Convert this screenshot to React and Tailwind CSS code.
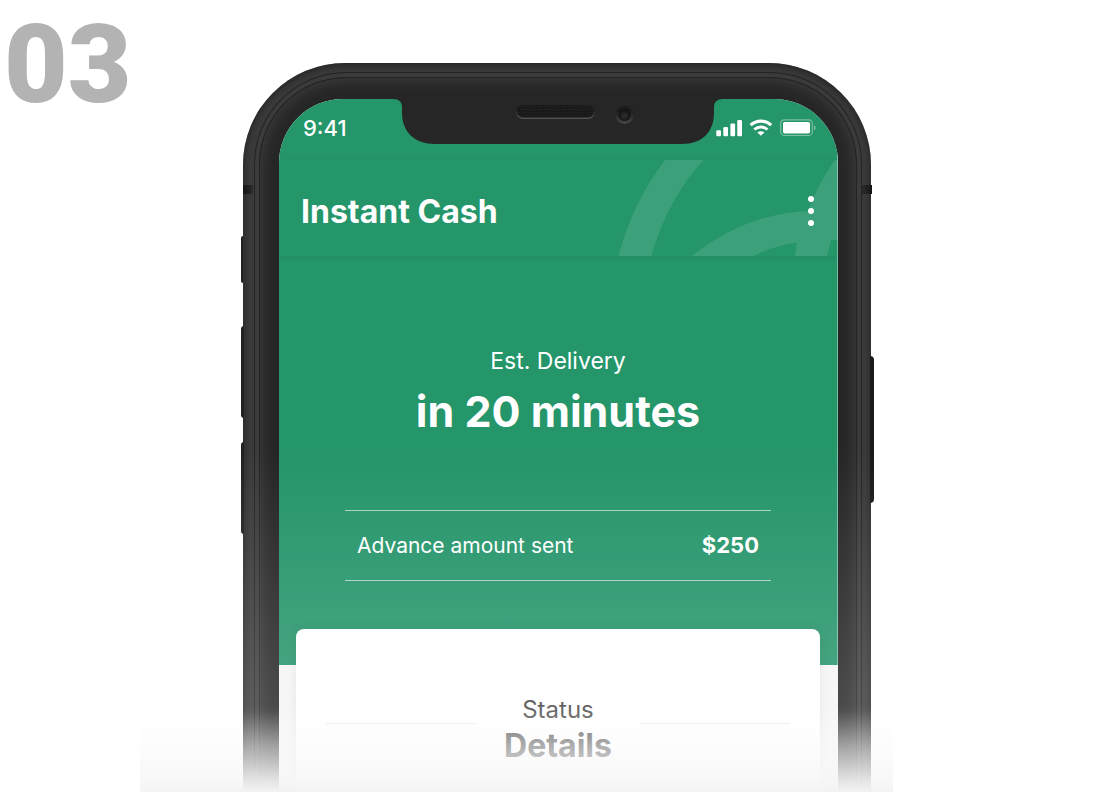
const deliveryInfo = {
  title: "Instant Cash",
  estimate: "in 20 minutes",
  amount: "$250",
};

function Notch() {
  return (
    <svg
      width="330"
      height="45"
      viewBox="0 0 330 45"
      className="shrink-0 self-start"
      aria-hidden="true"
    >
      <defs>
        <pattern id="mesh" width="3" height="3" patternUnits="userSpaceOnUse">
          <rect width="3" height="3" fill="#1e1e1e" />
          <path d="M0 0h1v1h-1zM2 2h1v1h-1z" fill="#121212" />
        </pattern>
        <linearGradient id="rim" x1="0" y1="0" x2="0" y2="1">
          <stop offset="0.3" stopColor="#1a1a1a" />
          <stop offset="1" stopColor="#555555" />
        </linearGradient>
        <radialGradient id="lens" cx="0.5" cy="0.6" r="0.5">
          <stop offset="0" stopColor="#303030" />
          <stop offset="1" stopColor="#121212" />
        </radialGradient>
      </defs>
      <path
        d="M0 0C6 0 9 3 9 8V14C9 33 22 45 42 45H289C309 45 321 33 321 14V8C321 3 324 0 330 0Z"
        fill="#262626"
      />
      <rect x="123" y="6" width="79" height="14" rx="7" fill="url(#rim)" />
      <rect x="124" y="6.5" width="77" height="12" rx="6" fill="url(#mesh)" />
      <circle cx="231.5" cy="15.7" r="9.3" fill="url(#rim)" opacity="0.7" />
      <circle cx="231.5" cy="15.7" r="6.3" fill="url(#lens)" />
    </svg>
  );
}

function StatusIcons() {
  return (
    <svg
      width="100"
      height="18"
      viewBox="0 0 100 18"
      className="mr-[21px] shrink-0"
      role="img"
      aria-label="Signal, Wi-Fi and battery"
    >
      <g fill="white">
        <rect x="0.3" y="11.2" width="4.7" height="6" rx="1.2" />
        <rect x="7.3" y="8" width="4.7" height="9.2" rx="1.2" />
        <rect x="14.4" y="4.4" width="4.7" height="12.8" rx="1.2" />
        <rect x="21.3" y="1" width="4.7" height="16.2" rx="1.2" />
        <rect x="67" y="3" width="27" height="11.4" rx="1.6" />
        <path d="M98 6.2C100.2 7.2 100.2 10.4 98 11.4Z" opacity="0.4" />
        <path d="M44.9 16.8L41.4 13.4C43.4 11.7 46.4 11.7 48.4 13.4Z" />
      </g>
      <g fill="none" stroke="white">
        <path d="M34.6 6.2C40.5 0.7 49.3 0.7 55.2 6.2" strokeWidth="3.2" />
        <path d="M38.3 10.5C42.1 7 47.7 7 51.5 10.5" strokeWidth="3" />
        <rect x="64.7" y="0.9" width="31.6" height="15.6" rx="3.6" strokeWidth="1.2" opacity="0.4" />
      </g>
    </svg>
  );
}

function HeaderLogo() {
  return (
    <svg
      width="221"
      height="96"
      viewBox="0 0 221 96"
      fill="white"
      fillOpacity="0.11"
      className="absolute -right-px top-0"
      aria-hidden="true"
    >
      <path d="M48 0H86.5C64 24 45 58 34.5 96H1.5C11 60 27 27 48 0Z" />
      <path d="M75 96C110 68 148 53 191 51C198 32 207 15 218 0H221V80H214L210 96H178L180 82.5C164 85 149 90 136 96Z" />
    </svg>
  );
}

function StatusBar() {
  return (
    <div className="flex h-[61px] justify-between">
      <div className="flex min-w-0 flex-1 items-center pb-[3px]">
        <span className="ml-6 text-[22px] leading-6 font-medium">9:41</span>
      </div>
      <Notch />
      <div className="flex min-w-0 flex-1 items-center justify-end pb-[3px]">
        <StatusIcons />
      </div>
    </div>
  );
}

function Header() {
  return (
    <header className="relative flex h-24 items-center justify-between pr-[21px] pl-[22px] shadow-[0_2px_5px_rgba(0,0,0,0.06)]">
      <HeaderLogo />
      <h1 className="relative pt-2 text-[32px] leading-10 font-bold">{deliveryInfo.title}</h1>
      <button type="button" aria-label="More options" className="relative flex flex-col gap-[6px] px-[2px] pt-[6px]">
        <span className="size-[6px] rounded-full bg-white" />
        <span className="size-[6px] rounded-full bg-white" />
        <span className="size-[6px] rounded-full bg-white" />
      </button>
    </header>
  );
}

function Summary() {
  return (
    <section className="flex flex-col items-center px-[66px] pt-[89px] pb-21">
      <p className="text-[23px] leading-8">Est. Delivery</p>
      <p className="pt-2 text-[43px] leading-[52px] font-bold">{deliveryInfo.estimate}</p>
      <dl className="mt-[73px] flex w-full items-center justify-between border-y border-white/60 px-3 py-5">
        <dt className="text-[21px] leading-[29px]">Advance amount sent</dt>
        <dd className="text-[22px] leading-[29px] font-bold">{deliveryInfo.amount}</dd>
      </dl>
    </section>
  );
}

function StatusCard() {
  return (
    <section className="mr-[18px] ml-[17px] -mt-9 flex-1 rounded-t-lg bg-white px-[30px] pt-[65px] shadow-[0_0_12px_rgba(0,0,0,0.08)]">
      <div className="flex items-start">
        <span className="mt-[29px] h-px flex-1 bg-gray-200" />
        <div className="w-[166px] text-center text-[#444444]">
          <p className="text-2xl leading-8">Status</p>
          <h2 className="text-[32px] leading-10 font-bold">Details</h2>
        </div>
        <span className="mt-[29px] h-px flex-1 bg-gray-200" />
      </div>
    </section>
  );
}

function SideButtons() {
  return (
    <div aria-hidden="true">
      <span className="absolute -left-[2px] top-[173px] h-[47px] w-[2px] rounded-l-sm bg-[#222222]" />
      <span className="absolute -left-[2px] top-[263px] h-[92px] w-[3px] rounded-l-sm bg-[#222222]" />
      <span className="absolute -left-[2px] top-[379px] h-[92px] w-[3px] rounded-l-sm bg-[#222222]" />
      <span className="absolute -right-[3px] top-[293px] h-[147px] w-[4px] rounded-r-sm bg-[#1a1a1a]" />
      <span className="absolute left-0 top-[122px] h-[9px] w-[10px] bg-linear-to-r from-[#151515] to-[#2c2c2c]" />
      <span className="absolute -right-px top-[122px] h-[9px] w-[10px] bg-linear-to-l from-[#151515] to-[#2c2c2c]" />
    </div>
  );
}

function Phone({ children }) {
  return (
    <div className="relative flex flex-1 flex-col rounded-t-[102px] bg-[#3b3b3b] pt-[9px] pr-[9px] pl-[11px] shadow-[inset_0_2px_8px_#202020]">
      <SideButtons />
      <div className="flex flex-1 flex-col rounded-t-[92px] border-x border-t border-[#232323] px-1 pt-1">
        <div className="flex flex-1 flex-col rounded-t-[87px] border-x border-t border-[#232323] bg-[#262626] pt-[21px] pr-[18px] pl-[19px] shadow-[inset_0_0_16px_#444444]">
          <div className="flex flex-1 flex-col overflow-hidden rounded-t-[64px] bg-[#f5f5f5]">
            {children}
          </div>
        </div>
      </div>
    </div>
  );
}

export default function App() {
  return (
    <div className="relative grid min-h-screen grid-cols-[minmax(0,1fr)_minmax(0,628px)_minmax(0,1fr)] overflow-hidden bg-white pl-1 font-['Inter',sans-serif]">
      <div className="font-['Roboto',sans-serif] text-[110px] leading-[130px] font-black text-[#b3b3b3]">
        03
      </div>
      <main className="flex flex-col pt-[63px]">
        <Phone>
          <div className="border-r border-white/40 bg-[#25956a] text-white">
            <StatusBar />
            <Header />
            <Summary />
          </div>
          <StatusCard />
        </Phone>
      </main>
      <div className="pointer-events-none absolute inset-x-0 bottom-0 flex justify-center pl-1">
        <div className="-ml-[81px] h-[342px] w-[753px] bg-[linear-gradient(to_top,#f3f3f3_0px,rgba(247,247,247,0.9)_12px,rgba(251,251,251,0.58)_46px,rgba(255,255,255,0.2)_80px,rgba(255,255,255,0.17)_86px,rgba(255,255,255,0.14)_130px,rgba(255,255,255,0)_342px)]" />
      </div>
    </div>
  );
}
